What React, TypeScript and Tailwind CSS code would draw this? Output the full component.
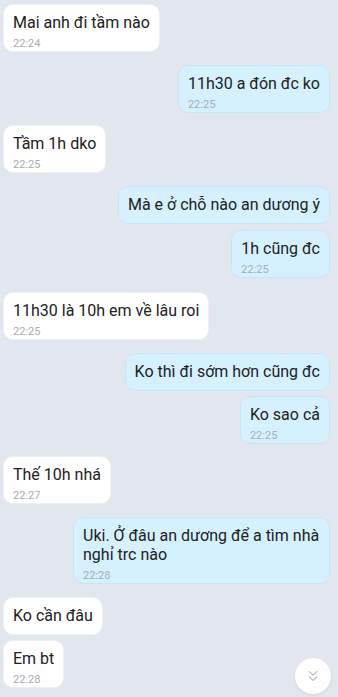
import React from "react";
import { ChevronsDown } from "lucide-react";

type Msg = { text: string; me: boolean; time?: string; gap: number };

const msgs: Msg[] = [
  { text: "Mai anh đi tầm nào", me: false, time: "22:24", gap: 4 },
  { text: "11h30 a đón đc ko", me: true, time: "22:25", gap: 13 },
  { text: "Tầm 1h dko", me: false, time: "22:25", gap: 12 },
  { text: "Mà e ở chỗ nào an dương ý", me: true, gap: 13 },
  { text: "1h cũng đc", me: true, time: "22:25", gap: 6 },
  { text: "11h30 là 10h em về lâu roi", me: false, time: "22:25", gap: 14 },
  { text: "Ko thì đi sớm hơn cũng đc", me: true, gap: 13 },
  { text: "Ko sao cả", me: true, time: "22:25", gap: 5 },
  { text: "Thế 10h nhá", me: false, time: "22:27", gap: 12 },
  { text: "Uki. Ở đâu an dương để a tìm nhà nghỉ trc nào", me: true, time: "22:28", gap: 13 },
  { text: "Ko cần đâu", me: false, gap: 13 },
  { text: "Em bt", me: false, time: "22:28", gap: 5 },
];

function Bubble({ m }: { m: Msg }) {
  const base = m.me
    ? "bg-[#d5f1fe] border border-[#c6e6f5]"
    : "bg-white border border-[#eef0f4]";
  return (
    <div
      className={`flex ${m.me ? "justify-end pr-[8px]" : "justify-start pl-[3px]"}`}
      style={{ marginTop: m.gap }}
    >
      <div
        className={`${base} rounded-[10px] max-w-[257px] px-[9px] ${
          m.time ? "pt-[8px] pb-[1px]" : "py-[8px]"
        }`}
      >
        <div className={`text-[16px] ${m.time ? "leading-[19px]" : "leading-[20px]"} text-[#212121]`}>{m.text}</div>
        {m.time && (
          <div className="text-[11px] leading-[13px] mt-[5px] text-[#a8acb3]">{m.time}</div>
        )}
      </div>
    </div>
  );
}

export default function App() {
  return (
    <div
      className="relative w-[338px] h-[697px] bg-[#e2e6ee] overflow-hidden"
      style={{ fontFamily: "Roboto, 'Noto Sans', sans-serif" }}
    >
      <div className="flex flex-col">
        {msgs.map((m, i) => (
          <Bubble key={i} m={m} />
        ))}
      </div>
      <div className="absolute left-[295px] top-[658px] w-[36px] h-[36px] rounded-full bg-white shadow-[0_1px_3px_rgba(0,0,0,0.08)] flex items-center justify-center">
        <ChevronsDown size={18} strokeWidth={1.3} color="#8b9099" />
      </div>
    </div>
  );
}
